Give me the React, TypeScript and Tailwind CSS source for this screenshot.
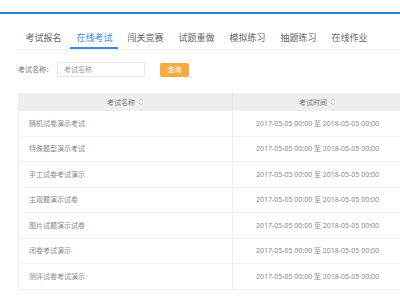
import React from "react";

const tabs = ["考试报名", "在线考试", "闯关竞赛", "试题重做", "模拟练习", "抽题练习", "在线作业"];
const rows = [
  "随机试卷演示考试",
  "特殊题型演示考试",
  "手工试卷考试演示",
  "主观题演示试卷",
  "图片试题演示试卷",
  "闭卷考试演示",
  "测评试卷考试演示",
];

function SortIcon() {
  return (
    <svg width="6" height="8" viewBox="0 0 6 8" className="ml-[3px]" fill="none" stroke="#c4c4c4" strokeWidth="0.8">
      <path d="M1 3 L3 1 L5 3" />
      <path d="M1 5 L3 7 L5 5" />
    </svg>
  );
}

export default function App() {
  const font = { fontFamily: '"Noto Sans", "Noto Sans CJK SC", sans-serif' };
  return (
    <div className="w-[400px] h-[300px] bg-white overflow-hidden" style={font}>
      <div className="h-[12px] bg-white" />
      <div className="h-[2px] bg-[#2f80d6]" />
      <div className="ml-[18px] h-[36px] border-b border-[#eeeeee] flex">
        {tabs.map((t, i) => (
          <div
            key={t}
            className={`relative w-[51px] h-[35px] pt-[11px] flex items-center justify-center text-[9px] leading-none ${
              i === 1 ? "text-[#3a8ae0]" : "text-[#666666]"
            }`}
          >
            {t}
            {i === 1 && <div className="absolute left-[1px] right-[2px] bottom-0 h-[2px] bg-[#3a8ae0]" />}
          </div>
        ))}
      </div>
      <div className="flex items-center ml-[18px] mt-[12px] h-[15px]">
        <span className="text-[7px] text-[#777777] w-[39px] leading-none">考试名称：</span>
        <div className="w-[88px] h-[15px] border border-[#e6e6e6] rounded-[1px] flex items-center pl-[6px] text-[7px] text-[#999999] leading-none">
          考试名称
        </div>
        <div className="ml-[15px] w-[29px] h-[14px] rounded-[2px] bg-[#f8a93f] flex items-center justify-center text-[7px] text-white leading-none">
          查询
        </div>
      </div>
      <div className="ml-[18px] mt-[16px] w-[384px] border-l border-[#f0f0f0]">
        <div className="flex h-[18px] bg-[#eeeeee] text-[7px] text-[#777777] leading-none">
          <div className="w-[214px] border-r border-[#e4e4e4] flex items-center justify-center">
            考试名称
            <SortIcon />
          </div>
          <div className="flex-1 flex items-center justify-center">
            考试时间
            <SortIcon />
          </div>
        </div>
        {rows.map((r) => (
          <div key={r} className="flex h-[25.5px] border-b border-[#efefef] text-[7px] text-[#888888] leading-none">
            <div className="w-[214px] border-r border-[#efefef] flex items-center pl-[10px]">{r}</div>
            <div className="flex-1 flex items-center justify-center">
              2017-05-05 00:00 至 2018-05-05 00:00
            </div>
          </div>
        ))}
      </div>
    </div>
  );
}
